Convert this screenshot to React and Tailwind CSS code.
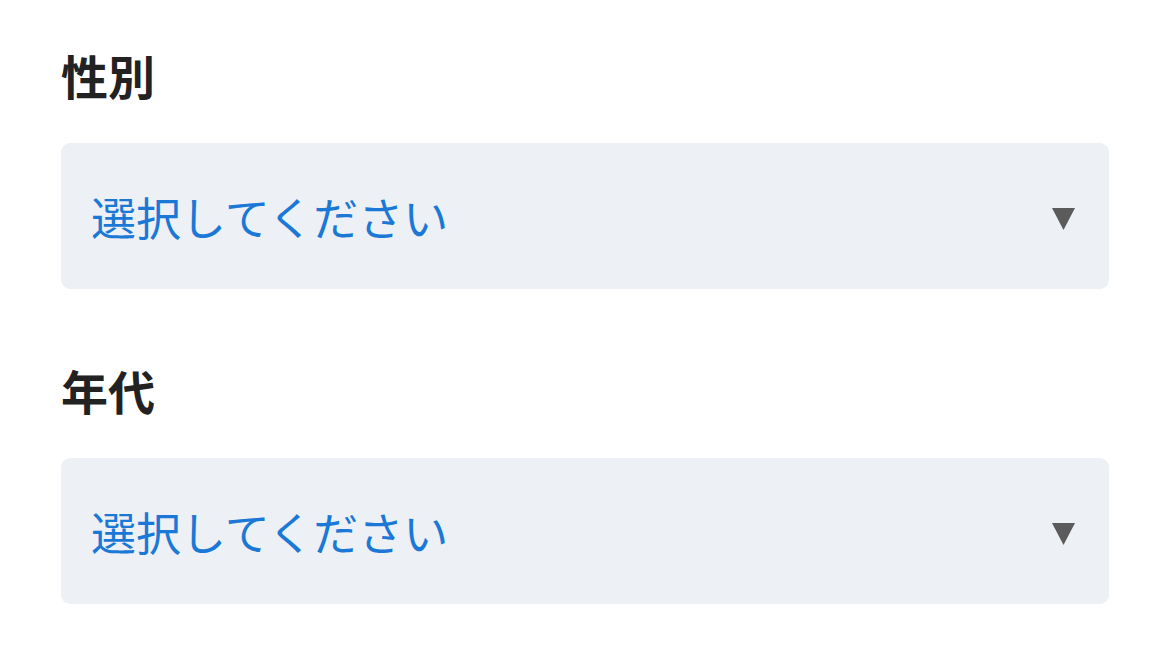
import React from "react";

const Caret = () => (
  <svg width="23" height="22" viewBox="0 0 23 22" className="mt-[6px] shrink-0">
    <polygon points="0,0 23,0 11.5,22" fill="#5b5b5b" />
  </svg>
);

const SelectField = ({ label }) => (
  <div className="flex flex-col">
    <label className="text-[47px] leading-[46px] font-bold text-[#222222]">{label}</label>
    <button
      type="button"
      className="mt-[45px] flex h-[146px] w-full items-center justify-between rounded-[9px] bg-[#edf0f4] pl-[30px] pr-[34px] text-left"
    >
      <span className="text-[45px] leading-none text-[#1b78d6]">選択してください</span>
      <Caret />
    </button>
  </div>
);

export default function App() {
  return (
    <div
      className="min-h-screen bg-white"
      style={{ fontFamily: '"Noto Sans CJK JP", "Noto Sans", sans-serif' }}
    >
      <div className="flex w-[1109px] flex-col gap-[78px] pl-[61px] pt-[52px]">
        <SelectField label="性別" />
        <SelectField label="年代" />
      </div>
    </div>
  );
}
